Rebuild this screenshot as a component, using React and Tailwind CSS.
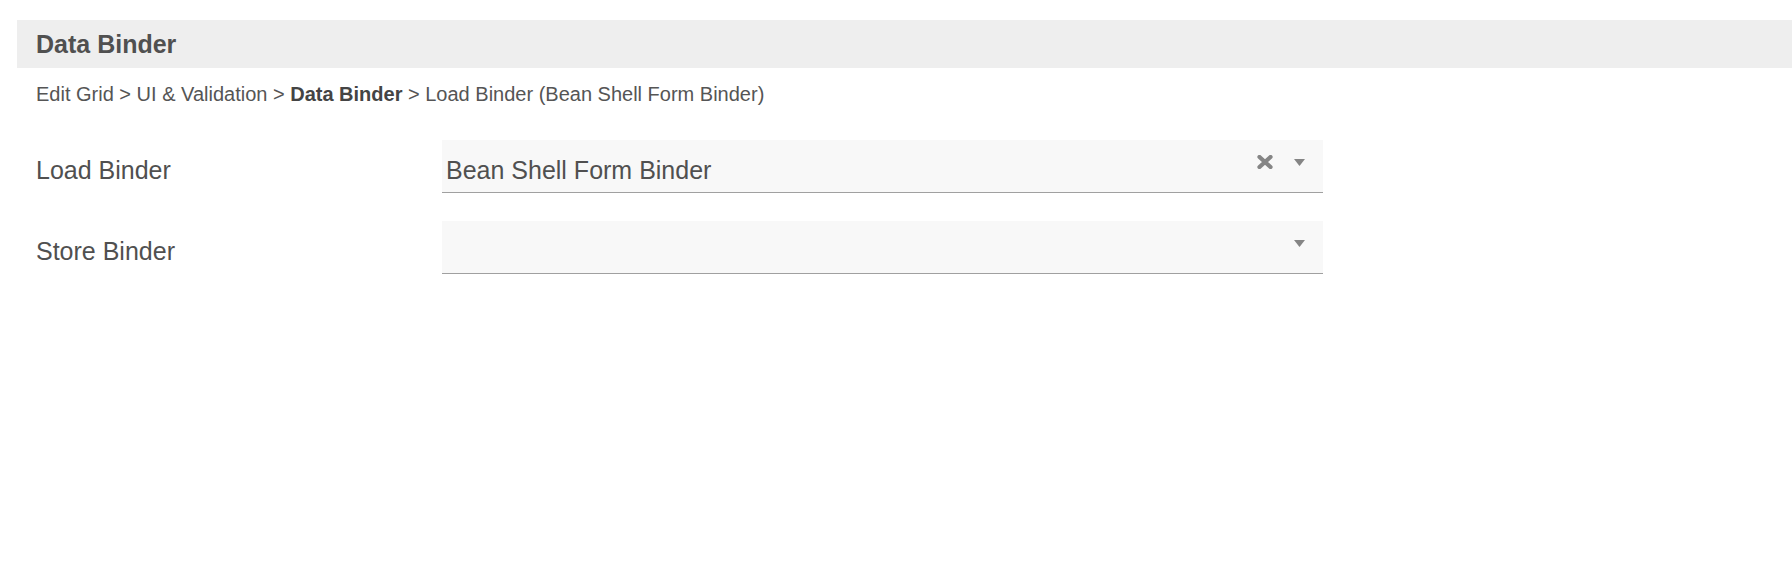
import React from 'react';

const ClearIcon = () => (
  <svg width="16" height="14" viewBox="0 0 16 14" className="mt-[15px] shrink-0">
    <path d="M2.5 2 L13.5 12 M13.5 2 L2.5 12" stroke="#858585" strokeWidth="4.2" strokeLinecap="round" fill="none" />
  </svg>
);

const Caret = () => (
  <svg width="11" height="7" viewBox="0 0 11 7" className="mt-[19px] shrink-0">
    <path d="M0 0 L11 0 L5.5 7 Z" fill="#858585" />
  </svg>
);

const SelectBox = ({ value, clearable }) => (
  <div className="flex items-start w-[881px] h-[53px] bg-[#f8f8f8] border-b border-[#a0a0a0] pl-[4px] pr-[18px]">
    <div className="flex-1 pt-[16px] text-[25px] leading-[29px] text-[#505050]">{value}</div>
    {clearable && <ClearIcon />}
    <div className={clearable ? 'ml-[21px]' : ''}>
      <Caret />
    </div>
  </div>
);

const FieldRow = ({ label, value, clearable, className = '' }) => (
  <div className={`flex items-start ${className}`}>
    <div className="w-[406px] shrink-0 pt-[16px] text-[25px] leading-[29px]">{label}</div>
    <SelectBox value={value} clearable={clearable} />
  </div>
);

export default function App() {
  return (
    <div className="min-h-screen bg-white pt-5 pl-[17px] text-[#505050] font-['Liberation_Sans',Arial,sans-serif]">
      {/* Header */}
      <div className="flex items-center h-12 bg-[#eeeeee] pl-[19px] pt-[2px] text-[25px] font-bold">
        Data Binder
      </div>

      {/* Breadcrumb */}
      <div className="mt-[14px] pl-[19px] text-[20px] leading-6 text-[#555]">
        Edit Grid &gt; UI &amp; Validation &gt; <span className="font-bold text-[#444]">Data Binder</span> &gt; Load Binder (Bean Shell Form Binder)
      </div>

      {/* Fields */}
      <div className="mt-[34px] pl-[19px]">
        <FieldRow label="Load Binder" value="Bean Shell Form Binder" clearable />
        <FieldRow label="Store Binder" value="" className="mt-[28px]" />
      </div>
    </div>
  );
}
